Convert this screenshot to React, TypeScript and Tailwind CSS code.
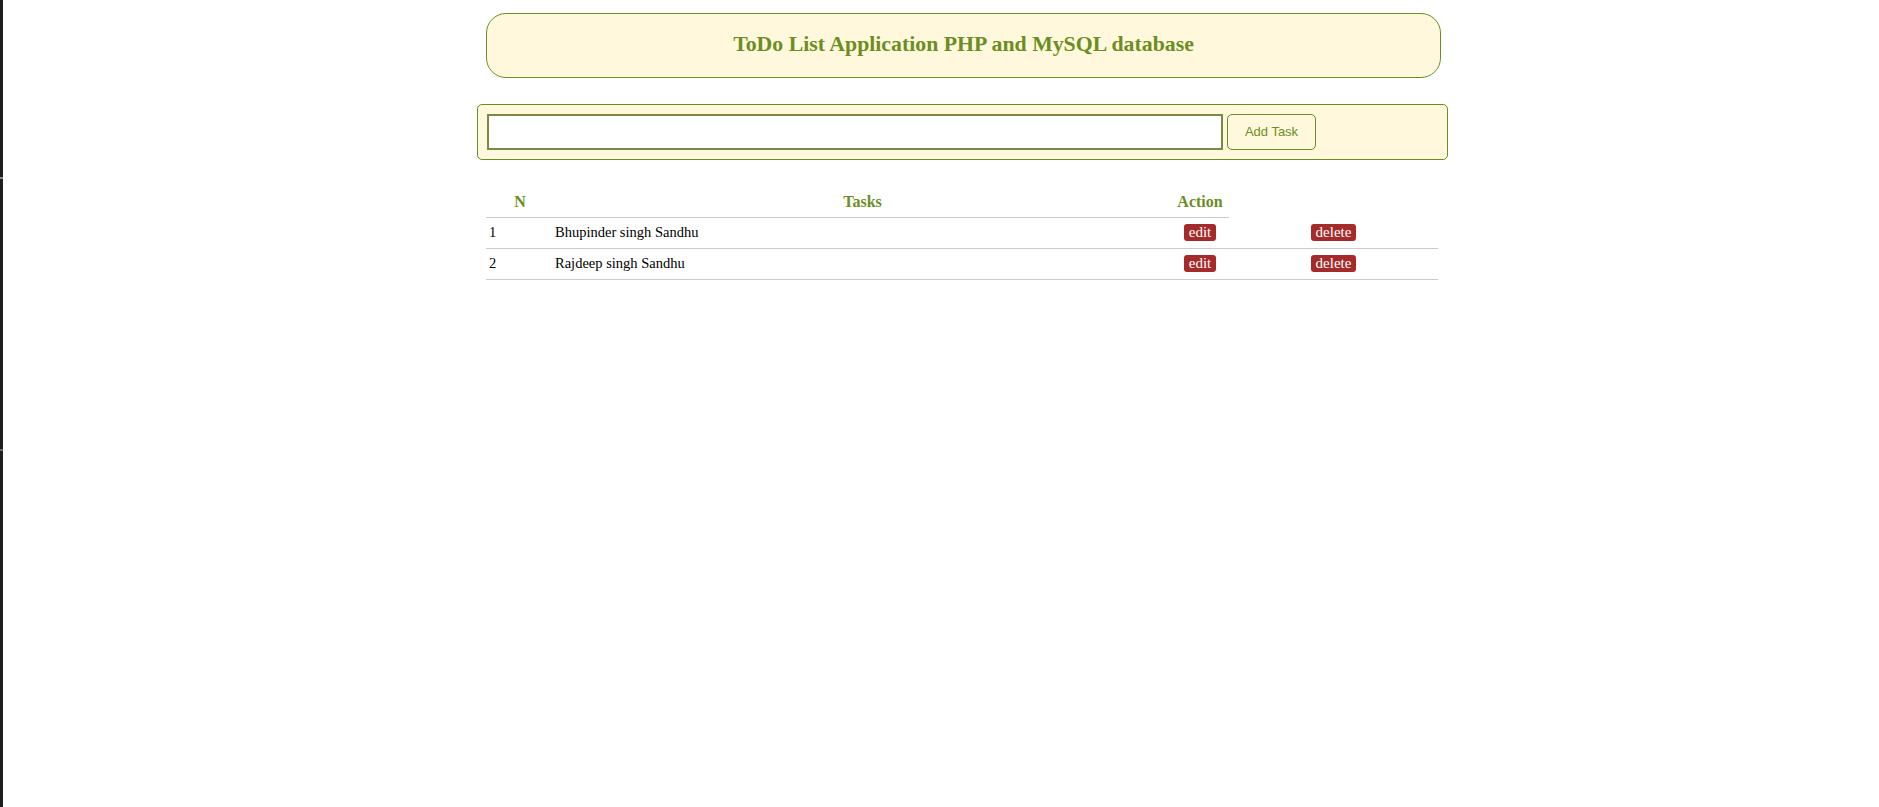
import { useState } from "react";

const tasks = [
    { id: 1, task: "Bhupinder singh Sandhu" },
    { id: 2, task: "Rajdeep singh Sandhu" },
];

export default function App() {
    const [text, setText] = useState("");

    return (
        <div className="flex h-[807px] w-full bg-white font-['Liberation_Serif',serif]">
            {/* window edge */}
            <div className="flex w-[3px] shrink-0 flex-col bg-[#1e1e1e]">
                <div className="h-[177px]"></div>
                <div className="h-[2px] w-[3px] bg-[#8a8a8a]"></div>
                <div className="h-[270px]"></div>
                <div className="h-[2px] w-[3px] bg-[#6a6a6a]"></div>
            </div>

            <div className="ml-[474px] flex w-[971px] flex-col">
                <div className="ml-[9px] mt-[13px] flex h-[65px] w-[955px] items-center justify-center rounded-[20px] border border-[#6b8e23] bg-[#fff8dc] pb-[3px]">
                    <h2 className="text-[21.8px] font-bold text-[#6b8e23]">ToDo List Application PHP and MySQL database</h2>
                </div>

                <form
                    onSubmit={(e) => e.preventDefault()}
                    className="mt-[26px] flex h-[56px] w-[971px] items-start gap-[4px] rounded-[5px] border border-[#6b8e23] bg-[#fff8dc] pl-[9px] pt-[9px]"
                >
                    <input
                        value={text}
                        onChange={(e) => setText(e.target.value)}
                        className="h-[36px] w-[736px] border-2 border-[#7a8a45] bg-white px-1 outline-none"
                    />
                    <button className="h-[36px] w-[89px] rounded-[5px] border border-[#6b8e23] bg-[#fff8dc] font-['Liberation_Sans',sans-serif] text-[13px] text-[#6b8e23]">
                        Add Task
                    </button>
                </form>

                <table className="ml-[9px] mt-[25px] w-[952px] table-fixed border-collapse text-[14.5px] text-black">
                    <colgroup>
                        <col className="w-[68px]" />
                        <col className="w-[617px]" />
                        <col className="w-[58px]" />
                        <col className="w-[209px]" />
                    </colgroup>
                    <thead>
                        <tr>
                            <th className="h-[32px] border-b border-[#cbcbcb] pt-[2px] text-[16px] font-bold text-[#6b8e23]">N</th>
                            <th className="h-[32px] border-b border-[#cbcbcb] pt-[2px] text-[16px] font-bold text-[#6b8e23]">Tasks</th>
                            <th className="h-[32px] border-b border-[#cbcbcb] pt-[2px] text-[16px] font-bold text-[#6b8e23]">Action</th>
                            <th></th>
                        </tr>
                    </thead>
                    <tbody>
                        {tasks.map((t) => (
                            <tr key={t.id} className="h-[31px] border-b border-[#cbcbcb]">
                                <td className="pl-[3px]">{t.id}</td>
                                <td className="pl-[1px]">{t.task}</td>
                                <td className="text-center">
                                    <a href="#" className="rounded-[3px] bg-[#a52a2a] px-[5px] pb-[1px] text-[15px] text-white">edit</a>
                                </td>
                                <td className="text-center">
                                    <a href="#" className="rounded-[3px] bg-[#a52a2a] px-[5px] pb-[1px] text-[15px] text-white">delete</a>
                                </td>
                            </tr>
                        ))}
                    </tbody>
                </table>
            </div>
        </div>
    );
}
